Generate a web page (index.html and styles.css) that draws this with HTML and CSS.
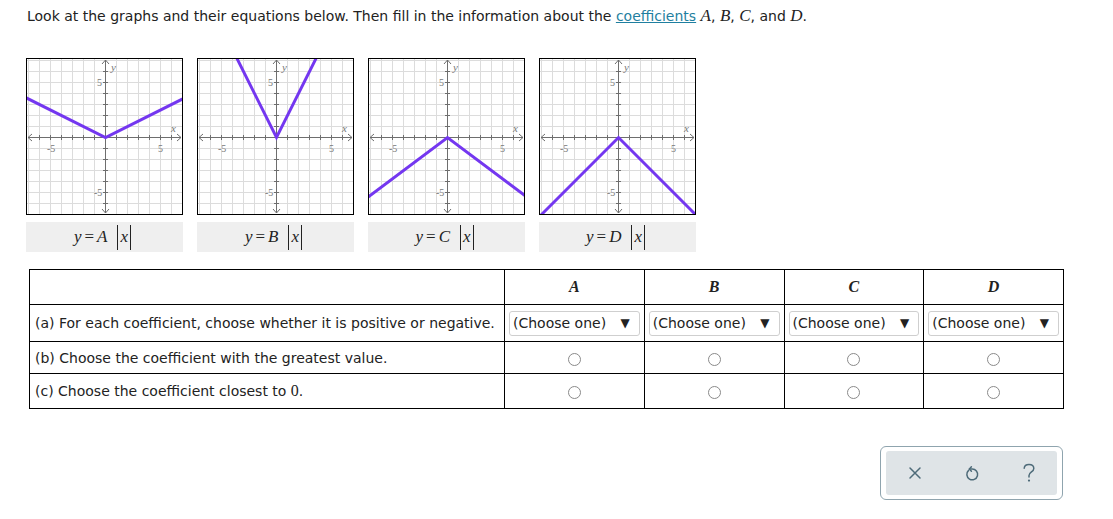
FILE: index.html
```html
<!DOCTYPE html>
<html>
<head>
<meta charset="utf-8">
<link rel="stylesheet" href="styles.css">
</head>
<body>
<svg class="defs" width="0" height="0" aria-hidden="true">
  <defs>
    <symbol id="plane" viewBox="0 0 155 155">
      <path class="grid" d="M1.5 0V155M12.5 0V155M23.5 0V155M34.5 0V155M45.5 0V155M56.5 0V155M67.5 0V155M89.5 0V155M100.5 0V155M111.5 0V155M122.5 0V155M133.5 0V155M144.5 0V155M0 1.5H155M0 12.5H155M0 23.5H155M0 34.5H155M0 45.5H155M0 56.5H155M0 67.5H155M0 89.5H155M0 100.5H155M0 111.5H155M0 122.5H155M0 133.5H155M0 144.5H155"/>
      <path class="axis" d="M1 78.5H154M78.5 1V154M5 75L1 78.5L5 82M150 75L154 78.5L150 82M75 5L78.5 1L82 5M75 150L78.5 154L82 150"/>
      <path class="axis" d="M12.5 76V81M23.5 76V81M34.5 76V81M45.5 76V81M56.5 76V81M67.5 76V81M89.5 76V81M100.5 76V81M111.5 76V81M122.5 76V81M133.5 76V81M144.5 76V81M76 12.5H81M76 23.5H81M76 34.5H81M76 45.5H81M76 56.5H81M76 67.5H81M76 89.5H81M76 100.5H81M76 111.5H81M76 122.5H81M76 133.5H81M76 144.5H81"/>
      <text class="lab" x="20" y="93">-5</text>
      <text class="lab" x="131" y="93">5</text>
      <text class="lab" x="70" y="27">5</text>
      <text class="lab" x="67" y="137">-5</text>
      <text class="lab it" x="84" y="12">y</text>
      <text class="lab it" x="144" y="73">x</text>
    </symbol>
  </defs>
</svg>

<div class="page">
  <p class="intro">Look at the graphs and their equations below. Then fill in the information about the <a class="link" href="#">coefficients</a> <span class="m">A</span>, <span class="m">B</span>, <span class="m">C</span>, and <span class="m">D</span>.</p>

  <div class="graphs">
    <div class="gcol">
      <svg class="graph" viewBox="0 0 155 155"><use href="#plane"/><polyline class="fn" points="-9.5,34.5 78.5,78.5 166.5,34.5"/></svg>
      <div class="eq"><span class="m">y</span><span class="eqs">=</span><span class="m">A</span><span class="abs"><span class="m">x</span></span></div>
    </div>
    <div class="gcol">
      <svg class="graph" viewBox="0 0 155 155"><use href="#plane"/><polyline class="fn" points="34.5,-9.5 78.5,78.5 122.5,-9.5"/></svg>
      <div class="eq"><span class="m">y</span><span class="eqs">=</span><span class="m">B</span><span class="abs"><span class="m">x</span></span></div>
    </div>
    <div class="gcol">
      <svg class="graph" viewBox="0 0 155 155"><use href="#plane"/><polyline class="fn" points="-9.5,144.5 78.5,78.5 166.5,144.5"/></svg>
      <div class="eq"><span class="m">y</span><span class="eqs">=</span><span class="m">C</span><span class="abs"><span class="m">x</span></span></div>
    </div>
    <div class="gcol">
      <svg class="graph" viewBox="0 0 155 155"><use href="#plane"/><polyline class="fn" points="-9.5,166.5 78.5,78.5 166.5,166.5"/></svg>
      <div class="eq"><span class="m">y</span><span class="eqs">=</span><span class="m">D</span><span class="abs"><span class="m">x</span></span></div>
    </div>
  </div>

  <table class="qt">
    <tr class="hrow">
      <th class="qcol"></th>
      <th class="m b">A</th>
      <th class="m b">B</th>
      <th class="m b">C</th>
      <th class="m b">D</th>
    </tr>
    <tr class="rowa">
      <td class="q">(a) For each coefficient, choose whether it is positive or negative.</td>
      <td class="sc"><div class="sel"><span>(Choose one)</span><span class="arr">▼</span></div></td>
      <td class="sc"><div class="sel"><span>(Choose one)</span><span class="arr">▼</span></div></td>
      <td class="sc"><div class="sel"><span>(Choose one)</span><span class="arr">▼</span></div></td>
      <td class="sc"><div class="sel"><span>(Choose one)</span><span class="arr">▼</span></div></td>
    </tr>
    <tr class="rowb">
      <td class="q">(b) Choose the coefficient with the greatest value.</td>
      <td class="rc"><span class="radio"></span></td>
      <td class="rc"><span class="radio"></span></td>
      <td class="rc"><span class="radio"></span></td>
      <td class="rc"><span class="radio"></span></td>
    </tr>
    <tr class="rowc">
      <td class="q">(c) Choose the coefficient closest to <span class="zero">0</span>.</td>
      <td class="rc"><span class="radio"></span></td>
      <td class="rc"><span class="radio"></span></td>
      <td class="rc"><span class="radio"></span></td>
      <td class="rc"><span class="radio"></span></td>
    </tr>
  </table>

  <div class="actions">
    <div class="btns">
      <button class="btn" aria-label="Clear">
        <svg width="14" height="14" viewBox="0 0 14 14"><path d="M2 2L12 12M12 2L2 12"/></svg>
      </button>
      <button class="btn" aria-label="Undo">
        <svg width="16" height="18" viewBox="0 0 16 18"><path d="M4.6 6.4A5.4 5.4 0 1 0 8 5H5.4"/><path d="M7.4 2.8L5.4 5L7.4 7.2"/></svg>
      </button>
      <button class="btn" aria-label="Help">
        <svg width="14" height="20" viewBox="0 0 14 20"><path d="M2.2 5.2C2.4 2.8 4.4 1.4 7 1.4C9.8 1.4 11.8 3 11.8 5.4C11.8 8.8 7 9 7 12.6V14"/><circle class="dot" cx="7" cy="17.6" r="1.1"/></svg>
      </button>
    </div>
  </div>
</div>
</body>
</html>
```

FILE: styles.css
```css
html, body {
  margin: 0;
  padding: 0;
  background: #fff;
}

body {
  font-family: "DejaVu Sans", Verdana, sans-serif;
  font-size: 14px;
  color: #222;
}

.defs {
  position: absolute;
  width: 0;
  height: 0;
  overflow: hidden;
}

.page {
  padding: 7px 0 0 26px;
}

.intro {
  margin: 0 0 0 1px;
  line-height: 17px;
}

.intro .m {
  font-size: 17px;
}

.link {
  color: #1f7fa0;
  text-decoration: underline;
}

.m {
  font-family: "Liberation Serif", "Times New Roman", serif;
  font-style: italic;
  font-size: 17px;
}

.graphs {
  display: flex;
  gap: 14px;
  margin-top: 33px;
}

.gcol {
  display: flex;
  flex-direction: column;
  gap: 7px;
  width: 157px;
}

.graph {
  display: block;
  width: 155px;
  height: 155px;
  border: 1px solid #000;
  background: #fff;
}

.grid {
  fill: none;
  stroke: #dcdcdc;
  stroke-width: 1;
}

.axis {
  fill: none;
  stroke: #6e6e6e;
  stroke-width: 1;
}

.lab {
  font-family: "Liberation Serif", "Times New Roman", serif;
  font-size: 10px;
  fill: #777;
}

.lab.it {
  font-style: italic;
  font-size: 11px;
}

.fn {
  fill: none;
  stroke: #7437f0;
  stroke-width: 3;
  stroke-linejoin: miter;
}

.eq {
  height: 30px;
  background: #efefef;
  display: flex;
  align-items: center;
  justify-content: center;
  padding-right: 4px;
  color: #222;
}

.eqs {
  font-family: "Liberation Serif", "Times New Roman", serif;
  font-size: 17px;
  margin: 0 3px;
}

.abs {
  display: inline-flex;
  align-items: center;
  height: 25px;
  border-left: 1px solid #222;
  border-right: 1px solid #222;
  padding: 0 2px;
  margin-left: 10px;
}

.qt {
  border-collapse: collapse;
  margin: 17px 0 0 3px;
  width: 1035px;
  table-layout: fixed;
}

.qt th, .qt td {
  border: 1px solid #000;
  padding: 0;
}

.qcol {
  width: 474px;
}

.hrow {
  height: 35px;
}

.b {
  font-weight: bold;
  font-size: 16px;
  text-align: center;
}

.rowa {
  height: 37px;
}

.rowb {
  height: 32px;
}

.rowc {
  height: 35px;
}

.q {
  padding-left: 5px !important;
  white-space: nowrap;
}

.zero {
  font-family: "Liberation Serif", "Times New Roman", serif;
  font-size: 16px;
}

.sc {
  padding: 0 4px !important;
}

.sel {
  box-sizing: border-box;
  height: 25px;
  border: 1px solid #cfcfcf;
  border-radius: 3px;
  display: flex;
  align-items: center;
  justify-content: space-between;
  padding: 0 9px 0 3px;
  background: #fff;
  color: #222;
}

.arr {
  font-size: 12px;
}

.rc {
  text-align: center;
}

.radio {
  display: inline-block;
  width: 11px;
  height: 11px;
  border: 1px solid #8a8a8a;
  border-radius: 50%;
  vertical-align: middle;
  margin-top: 1px;
}

.actions {
  display: flex;
  justify-content: flex-end;
  width: 1037px;
  margin-top: 37px;
}

.btns {
  display: flex;
  border: 1px solid #8fa4ae;
  border-radius: 6px;
  padding: 4px 5px;
  background: #fff;
}

.btn {
  width: 57px;
  height: 44px;
  border: 0;
  margin: 0;
  padding: 0;
  background: #dfe4e7;
  display: flex;
  align-items: center;
  justify-content: center;
}

.btn:first-child {
  border-radius: 3px 0 0 3px;
}

.btn:last-child {
  border-radius: 0 3px 3px 0;
}

.btn svg path {
  fill: none;
  stroke: #4e6b79;
  stroke-width: 1.5;
  stroke-linecap: round;
  stroke-linejoin: round;
}

.btn svg .dot {
  fill: #4e6b79;
}
```
